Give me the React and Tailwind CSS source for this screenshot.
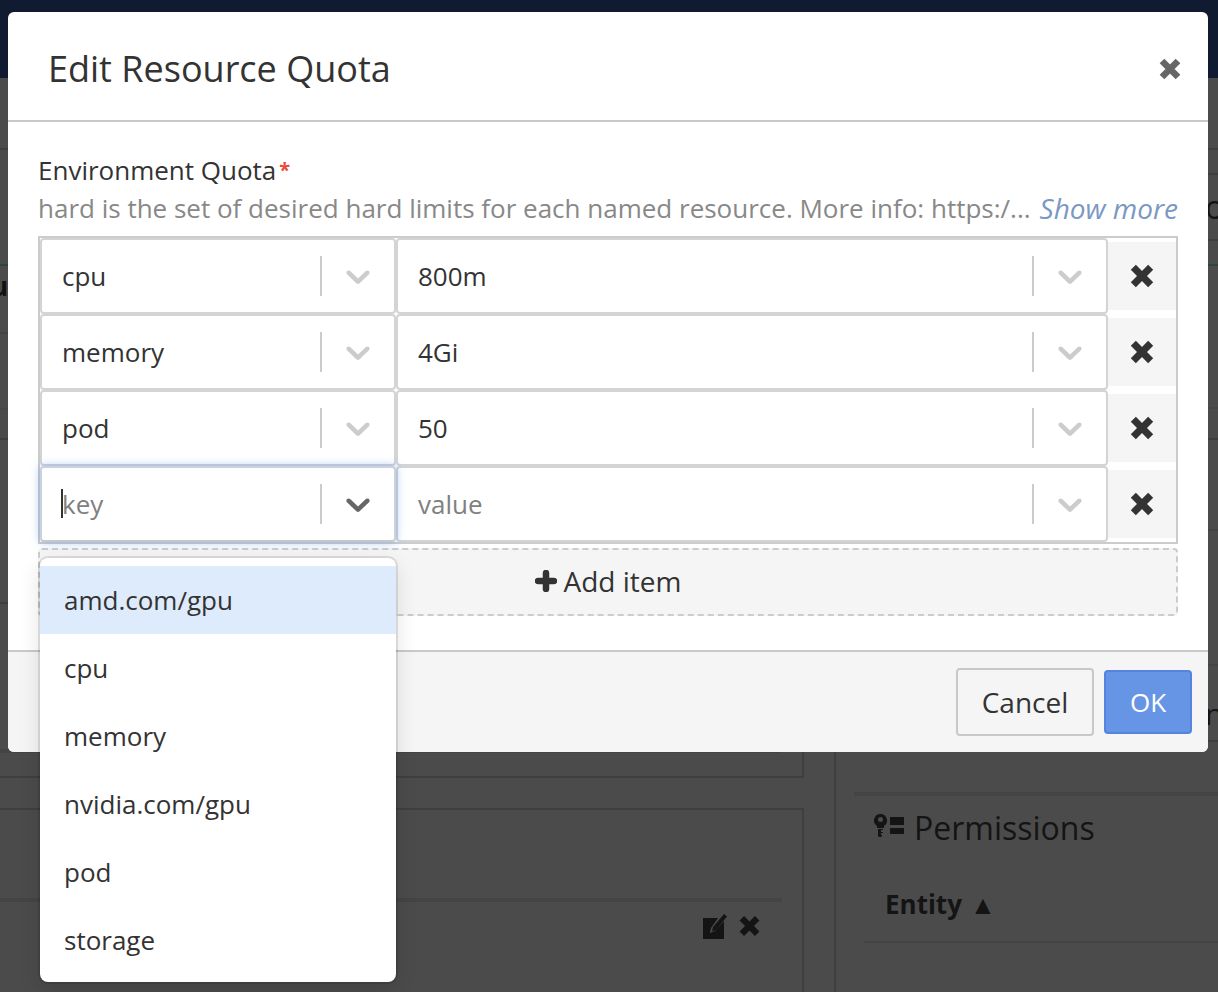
import React from 'react';

const rows = [
  { key: 'cpu', value: '800m' },
  { key: 'memory', value: '4Gi' },
  { key: 'pod', value: '50' },
];

const options = ['amd.com/gpu', 'cpu', 'memory', 'nvidia.com/gpu', 'pod', 'storage'];

function Chevron({ className }) {
  return (
    <svg viewBox="0 0 20 20" className={className} fill="currentColor">
      <path d="M4.516 7.548c0.436-0.446 1.043-0.481 1.576 0l3.908 3.747 3.908-3.747c0.533-0.481 1.141-0.446 1.574 0 0.436 0.445 0.408 1.197 0 1.615-0.406 0.418-4.695 4.502-4.695 4.502-0.217 0.223-0.502 0.335-0.787 0.335s-0.57-0.112-0.789-0.335c0 0-4.287-4.084-4.695-4.502s-0.436-1.17 0-1.615z" />
    </svg>
  );
}

// heavy cross used for close and delete buttons
function Cross({ className }) {
  return (
    <svg viewBox="0 0 24 24" className={className} fill="none" stroke="currentColor" strokeWidth="6.6">
      <path d="M4 4 20 20M20 4 4 20" />
    </svg>
  );
}

function Select({ className, children, focused }) {
  return (
    <div className={`flex h-[76px] shrink-0 items-center rounded-[4px] border-2 bg-white ${focused ? 'relative border-[#c9d3df] border-b-[#c4c8cc] shadow-[0_0_10px_rgba(92,150,225,0.55)]' : 'border-[#d4d4d4]'} ${className}`}>
      <div className="min-w-0 flex-1 pl-5">{children}</div>
      <div className="h-10 w-0.5 bg-[#cccccc]" />
      <div className="flex w-[72px] items-center justify-center">
        <Chevron className={`h-10 w-10 ${focused ? 'text-[#666666]' : 'text-[#cccccc]'}`} />
      </div>
    </div>
  );
}

function DeleteCell() {
  return (
    <div className="flex h-[68px] w-[68px] items-center justify-center self-center bg-[#f5f5f5]">
      <Cross className="h-[26px] w-[26px] text-[#333333]" />
    </div>
  );
}

function Dropdown() {
  return (
    <div className="absolute left-0 top-[92px] z-10 w-[356px] rounded-lg bg-white py-2 shadow-[0_0_0_2px_rgba(0,0,0,0.1),0_8px_22px_rgba(0,0,0,0.12)]">
      {options.map((o, i) => (
        <div key={o} className={`flex h-[68px] items-center pl-6 text-[#333333] ${i === 0 ? 'bg-[#deebfc]' : ''}`}>{o}</div>
      ))}
    </div>
  );
}

function Modal() {
  return (
    <div className="absolute left-2 top-3 z-20 flex h-[740px] w-[1200px] flex-col rounded-md bg-white text-[26px] leading-[38px] text-[#333333]">
      <div className="flex h-[110px] shrink-0 items-center justify-between border-b-2 border-[#c9c9cc] pl-[40px] pr-[26px]">
        <h2 className="pt-[6px] text-[36px] font-normal text-[#333333]">Edit Resource Quota</h2>
        <Cross className="mt-[5px] h-[24px] w-[24px] text-[#666666]" />
      </div>
      <div className="flex-1 px-[30px] pt-[29px]">
        <div className="flex h-[38px] items-center">
          Environment Quota<span className="ml-[3px] self-start text-[20px] font-bold leading-[38px] text-[#e74c3c]">*</span>
        </div>
        <div className="flex h-[38px] items-center justify-between whitespace-nowrap text-[#888888]">
          <span>hard is the set of desired hard limits for each named resource. More info: https:/...</span>
          <span className="text-[28px] italic text-[#7b98c3]">Show more</span>
        </div>
        <div className="mt-[9px] border-2 border-[#cccccc]">
          {rows.map((r) => (
            <div key={r.key} className="flex">
              <Select className="w-[356px]">{r.key}</Select>
              <Select className="w-[712px]">{r.value}</Select>
              <DeleteCell />
            </div>
          ))}
          <div className="relative flex">
            <Select className="z-[1] w-[356px]" focused>
              <span className="relative text-[#808080]">
                <span className="absolute -left-px top-[3px] h-[29px] w-0.5 bg-[#333333]" />
                key
              </span>
            </Select>
            <Select className="w-[712px]"><span className="text-[#808080]">value</span></Select>
            <DeleteCell />
            <Dropdown />
          </div>
        </div>
        <div className="mt-[4px] flex h-[68px] items-center justify-center gap-[7px] rounded-[4px] border-2 border-dashed border-[#cccccc] bg-[#f5f5f5] pb-[2px] text-[28px]">
          <svg viewBox="0 0 22 22" className="h-[22px] w-[22px] text-[#333333]" fill="none" stroke="currentColor" strokeWidth="6.5" strokeLinecap="round">
            <path d="M3 11h16M11 3v16" />
          </svg>
          Add item
        </div>
      </div>
      <div className="flex h-[102px] shrink-0 items-center justify-end gap-[10px] rounded-b-md border-t-2 border-[#c9c9cc] bg-[#f5f5f5] pr-4">
        <button className="h-[68px] w-[138px] rounded-[4px] border-2 border-[#c8c8c8] bg-[#f5f5f5] text-[28px] text-[#333333]">Cancel</button>
        <button className="h-[64px] w-[88px] rounded-[4px] border-2 border-[#5683e0] bg-[#6795e6] text-white">OK</button>
      </div>
    </div>
  );
}

function LeftColumn() {
  return (
    <div className="w-[836px] shrink-0 border-r-2 border-[#3f3f3f]">
      <div className="h-[700px] w-[804px] border-b-2 border-r-2 border-[#3f3f3f]">
        <div className="h-[72px] border-b-2 border-[#3f3f3f]" />
        <div className="h-[116px] border-b-2 border-[#2f4632]" />
        <div className="h-[68px] overflow-hidden border-b-2 border-[#444444]">
          <span className="-ml-[9px] block pt-[2px] text-[26px] font-bold leading-[36px] text-[#111111]">u</span>
        </div>
        <div className="h-[76px] border-b-2 border-[#474747]" />
        <div className="h-[30px] border-b-2 border-[#3f3f3f]" />
        <div className="h-[164px] border-b-2 border-[#3f3f3f]" />
        <div className="h-[149px] w-[782px] border-b-4 border-[#444444]" />
      </div>
      <div className="mt-[30px] h-[200px] w-[804px] border-r-2 border-t-2 border-[#3f3f3f]">
        <div className="h-[92px] w-[782px] border-b-4 border-[#444444]" />
        <div className="flex w-[761px] items-center justify-end gap-[10px] pt-[11px]">
          <svg viewBox="0 0 25 26" className="h-[26px] w-[25px] text-[#141414]" fill="currentColor">
            <path d="M0 5h15l-7 10-1 5 5-2 9-10v18H0z" />
            <path d="M10 14 21 1l3 2.5L13 17l-4 1.5z" />
          </svg>
          <Cross className="h-[24px] w-[23px] text-[#141414]" />
        </div>
      </div>
    </div>
  );
}

function RightColumn() {
  return (
    <div className="min-w-0 flex-1 overflow-hidden">
      <div className="h-[72px] border-b-2 border-[#3f3f3f]" />
      <div className="h-[25px] border-b-2 border-[#3f3f3f]" />
      <div className="flex h-[66px] items-center border-b-2 border-[#3f3f3f]">
        <span className="ml-[369px] text-[32px] leading-none text-[#141414]">o</span>
      </div>
      <div className="h-[25px] border-b-2 border-[#2f4632]" />
      <div className="h-[143px] border-b-2 border-[#474747]" />
      <div className="h-[31px] border-b-2 border-[#3f3f3f]" />
      <div className="h-[91px] border-b-2 border-[#444444]" />
      <div className="h-[135px] border-b-2 border-[#444444]" />
      <div className="flex h-[76px] items-center border-b-2 border-[#3f3f3f] pt-[22px]">
        <span className="ml-[369px] text-[30px] leading-none text-[#141414]">n</span>
      </div>
      <div className="ml-[18px] mt-[50px] border-t-4 border-[#444444] pt-[10px]">
        <div className="flex items-center pl-[20px] text-[32px] leading-[44px] text-[#141414]">
          <svg viewBox="0 0 30 24" className="mb-[5px] mr-[10px] h-[24px] w-[30px]" fill="currentColor">
            <path fillRule="evenodd" d="M6.5 0a6.5 6.5 0 0 1 3.5 12v2H3v-2A6.5 6.5 0 0 1 6.5 0zm0 3a2.5 2.5 0 1 0 0 5 2.5 2.5 0 0 0 0-5zM4 15h5v1H7v2h2v1H7v2h1v1l-1 1H5l-1-1z" />
            <rect x="16" y="3" width="14" height="8" />
            <rect x="16" y="14" width="14" height="6" />
          </svg>
          Permissions
        </div>
        <div className="ml-[10px] mt-[34px] border-b-2 border-[#444444] pb-[17px] pl-[21px]">
          <span className="text-[26px] font-bold leading-[40px] text-[#141414]">Entity</span>
          <span className="ml-[8px] text-[26px] leading-[40px] text-[#141414]">▲</span>
        </div>
      </div>
    </div>
  );
}

export default function App() {
  return (
    <div className="relative h-[992px] w-[1218px] overflow-hidden bg-[#4b4b4b] font-['Open_Sans',sans-serif]">
      <div className="h-[78px] bg-[#101b31]" />
      <div className="flex h-[914px]">
        <LeftColumn />
        <RightColumn />
      </div>
      <Modal />
    </div>
  );
}
